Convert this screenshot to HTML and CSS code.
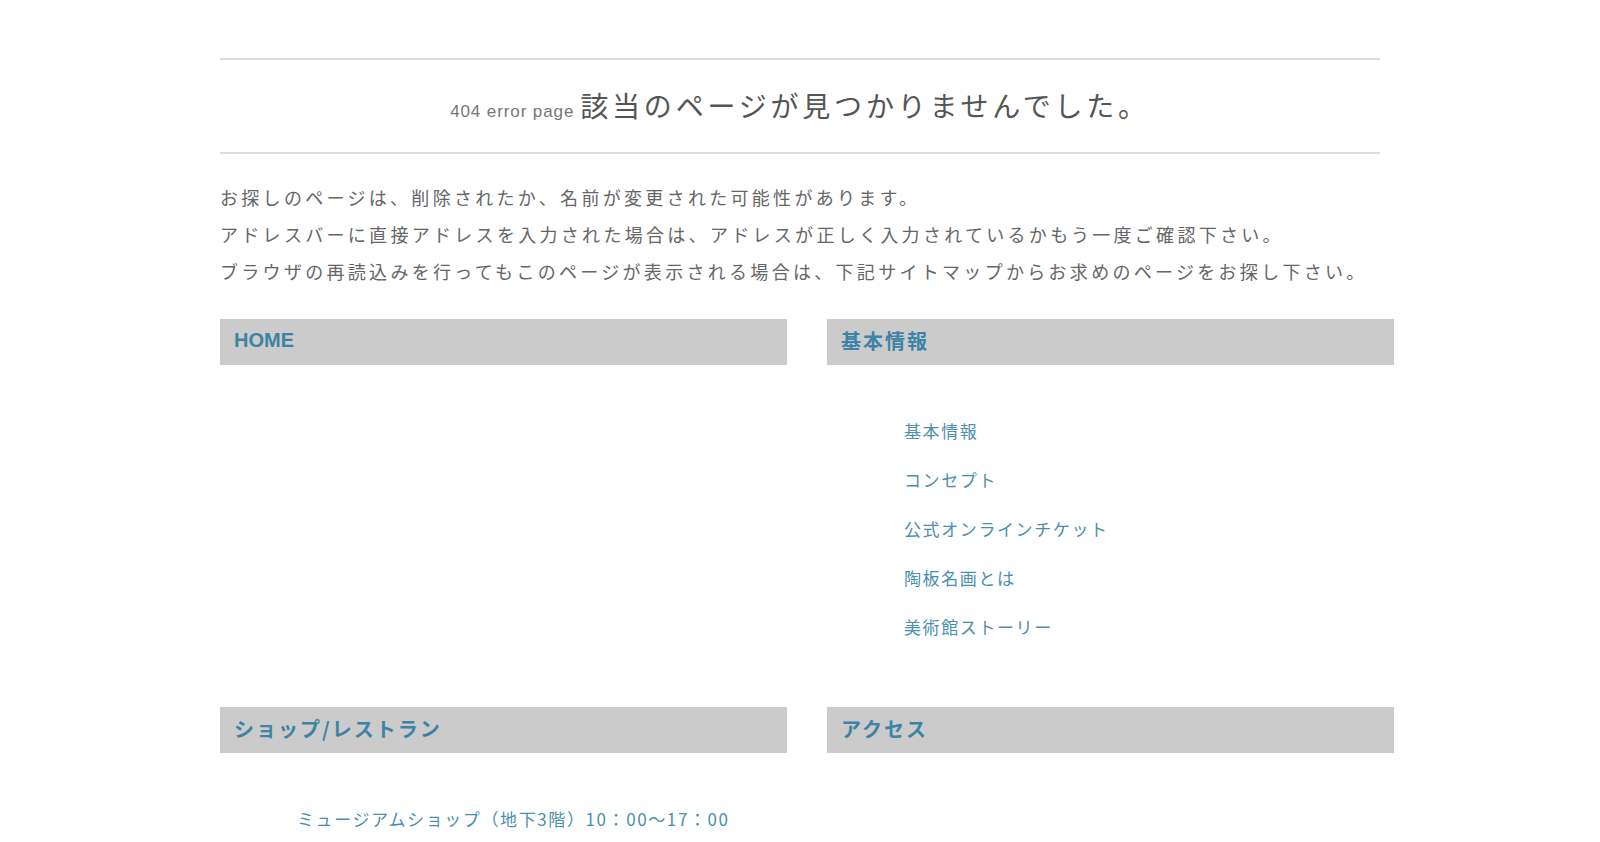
FILE: index.html
```html
<!DOCTYPE html>
<html lang="ja">
<head>
<meta charset="utf-8">
<title>404 error page</title>
<link rel="stylesheet" href="styles.css">
</head>
<body>
<div class="page">
  <h1 class="title"><span class="title-sub">404 error page</span><span class="title-main">該当のページが見つかりませんでした。</span></h1>
  <div class="message">
    <p>お探しのページは、削除されたか、名前が変更された可能性があります。</p>
    <p>アドレスバーに直接アドレスを入力された場合は、アドレスが正しく入力されているかもう一度ご確認下さい。</p>
    <p>ブラウザの再読込みを行ってもこのページが表示される場合は、下記サイトマップからお求めのページをお探し下さい。</p>
  </div>
  <div class="sitemap">
    <section class="group">
      <h2 class="group-head"><a href="#" class="latin">HOME</a></h2>
      <ul class="links"></ul>
    </section>
    <section class="group">
      <h2 class="group-head"><a href="#">基本情報</a></h2>
      <ul class="links">
        <li><a href="#">基本情報</a></li>
        <li><a href="#">コンセプト</a></li>
        <li><a href="#">公式オンラインチケット</a></li>
        <li><a href="#">陶板名画とは</a></li>
        <li><a href="#">美術館ストーリー</a></li>
      </ul>
    </section>
    <section class="group">
      <h2 class="group-head"><a href="#">ショップ/レストラン</a></h2>
      <ul class="links">
        <li><a href="#">ミュージアムショップ（地下3階）10：00〜17：00</a></li>
      </ul>
    </section>
    <section class="group">
      <h2 class="group-head"><a href="#">アクセス</a></h2>
      <ul class="links"></ul>
    </section>
  </div>
</div>
</body>
</html>
```
FILE: styles.css
```css
html, body {
  margin: 0;
  padding: 0;
  background: #fff;
}
body {
  font-family: "Noto Sans CJK JP", "Noto Sans", "Liberation Sans", sans-serif;
  color: #666;
}
.page {
  width: 1160px;
  margin: 0 auto;
  padding-top: 58px;
}
.title {
  margin: 0;
  border-top: 2px solid #dcdcdc;
  border-bottom: 2px solid #dcdcdc;
  height: 96px;
  display: flex;
  align-items: baseline;
  justify-content: center;
  padding-top: 25px;
  box-sizing: border-box;
  font-weight: normal;
  color: #555;
}
.title-sub {
  font-family: "Liberation Sans", "Noto Sans", sans-serif;
  font-size: 17px;
  letter-spacing: 0.9px;
  color: #777;
  margin-right: 6px;
}
.title-main {
  font-size: 28px;
  letter-spacing: 3.8px;
  line-height: 40px;
}
.message {
  margin-top: 25px;
}
.message p {
  margin: 0;
  font-size: 18px;
  line-height: 37px;
  letter-spacing: 3.3px;
  white-space: nowrap;
}
.sitemap {
  width: 1174px;
  margin-top: 29px;
  display: grid;
  grid-template-columns: 567px 567px;
  column-gap: 40px;
}
.group-head {
  margin: 0;
  height: 46px;
  background: #cbcbcb;
  padding: 0 0 3px 14px;
  box-sizing: border-box;
  display: flex;
  align-items: center;
  font-size: 20px;
  font-weight: bold;
  letter-spacing: 2px;
}
.group-head a {
  color: #3d83a5;
  text-decoration: none;
}
.group-head .latin {
  font-family: "Liberation Sans", "Noto Sans", sans-serif;
  letter-spacing: 0;
}
.links {
  list-style: none;
  margin: 41px 0 56px;
  padding: 0 0 0 77px;
}
.links li {
  font-size: 17px;
  line-height: 49px;
  letter-spacing: 1.6px;
  white-space: nowrap;
}
.links a {
  color: #4a8fae;
  text-decoration: none;
}
```
